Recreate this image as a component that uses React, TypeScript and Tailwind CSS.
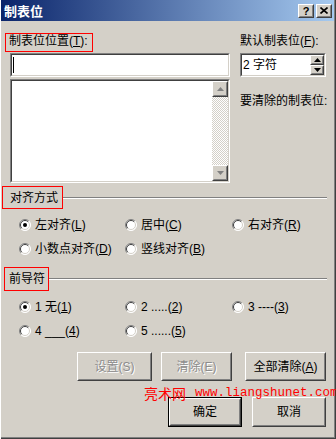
import React from "react";

const FONT = "font-['Liberation_Sans','Noto_Sans_CJK_SC',sans-serif]";

function Sunken({ className, children }: { className: string; children?: React.ReactNode }) {
  return (
    <div className={"border border-t-[#808080] border-l-[#808080] border-b-white border-r-white " + className}>
      <div className="h-full w-full border border-t-[#404040] border-l-[#404040] border-b-[#d4d0c8] border-r-[#d4d0c8] bg-white flex">
        {children}
      </div>
    </div>
  );
}

function Raised({ className, children }: { className: string; children?: React.ReactNode }) {
  return (
    <div className={"border border-t-white border-l-white border-b-[#404040] border-r-[#404040] bg-[#d4d0c8] " + className}>
      <div className="h-full w-full border border-t-[#d4d0c8] border-l-[#d4d0c8] border-b-[#808080] border-r-[#808080] flex items-center justify-center">
        {children}
      </div>
    </div>
  );
}

function Tri({ up, color }: { up: boolean; color: string }) {
  return (
    <svg width="7" height="4" viewBox="0 0 7 4">
      {up ? <polygon points="3.5,0 7,4 0,4" fill={color} /> : <polygon points="0,0 7,0 3.5,4" fill={color} />}
    </svg>
  );
}

function RadioDot({ checked }: { checked?: boolean }) {
  return (
    <svg width="12" height="12" viewBox="0 0 12 12" className="shrink-0">
      <circle cx="6" cy="6" r="5.5" fill="#ffffff" />
      <path d="M2.1 9.9 A5.5 5.5 0 0 1 9.9 2.1" stroke="#808080" fill="none" />
      <path d="M9.9 2.1 A5.5 5.5 0 0 1 2.1 9.9" stroke="#ffffff" fill="none" />
      <path d="M2.8 9.2 A4.5 4.5 0 0 1 9.2 2.8" stroke="#404040" fill="none" />
      <path d="M9.2 2.8 A4.5 4.5 0 0 1 2.8 9.2" stroke="#d4d0c8" fill="none" />
      {checked && <circle cx="6" cy="6" r="2" fill="#000000" />}
    </svg>
  );
}

function Radio({ checked, children, w }: { checked?: boolean; children: React.ReactNode; w: string }) {
  return (
    <div className={"flex items-center gap-[4px] " + w}>
      <RadioDot checked={checked} />
      <span className="text-[12px] leading-[14px] whitespace-nowrap">{children}</span>
    </div>
  );
}

function SectionHead({ label, boxCls, lineCls }: { label: string; boxCls: string; lineCls: string }) {
  return (
    <div className="flex items-center">
      <div className={"border border-[#ff0000] text-[12px] flex items-center " + boxCls}>{label}</div>
      <div className={"h-[2px] border-t border-t-[#808080] border-b border-b-white flex-1 " + lineCls} />
    </div>
  );
}

export default function App() {
  return (
    <div
      className={
        "relative w-[336px] h-[439px] bg-[#d4d0c8] overflow-hidden text-black flex flex-col " +
        FONT +
        " shadow-[inset_1px_0_0_#ffffff,inset_-1px_-1px_0_#404040,inset_-2px_-2px_0_#808080]"
      }
    >
      {/* Title bar */}
      <div className="h-[21px] mx-[1px] mr-[2px] flex items-center bg-[linear-gradient(to_right,#0a246a,#a6caf0)]">
        <span className="ml-[3px] pt-[2px] text-white font-bold text-[13px] leading-[15px]">制表位</span>
        <div className="ml-auto flex gap-[2px] mr-[2px]">
          <Raised className="w-[16px] h-[14px]">
            <span className="text-[11px] font-bold leading-[10px] font-['Liberation_Sans',sans-serif]">?</span>
          </Raised>
          <Raised className="w-[16px] h-[14px]">
            <svg width="8" height="7" viewBox="0 0 8 7">
              <path d="M0.5 0.5 L7.5 6.5 M7.5 0.5 L0.5 6.5" stroke="#000" strokeWidth="1.6" />
            </svg>
          </Raised>
        </div>
      </div>

      {/* Top row */}
      <div className="flex mt-[12px]">
        <div className="ml-[5px] w-[225px] flex flex-col">
          <div className="w-[88px] h-[19px] border border-[#ff0000] pl-[3px] text-[12px] leading-[15px] whitespace-nowrap">
            制表位位置(<u>T</u>):
          </div>
          <Sunken className="ml-[5px] mt-[1px] w-[220px] h-[24px]">
            <div className="ml-[1px] mt-[2px] w-[1px] h-[16px] bg-black" />
          </Sunken>
          <Sunken className="ml-[5px] mt-[2px] w-[220px] h-[104px]">
            <div className="flex-1" />
            <div className="w-[16px] h-full flex flex-col">
              <Raised className="w-[16px] h-[16px]">
                <Tri up color="#808080" />
              </Raised>
              <div className="flex-1 [background-image:repeating-conic-gradient(#d4d0c8_0%_25%,#ffffff_0%_50%)] [background-size:2px_2px]" />
              <Raised className="w-[16px] h-[16px]">
                <Tri up={false} color="#808080" />
              </Raised>
            </div>
          </Sunken>
        </div>
        <div className="ml-[10px] w-[87px] flex flex-col">
          <div className="h-[19px] pt-[1px] text-[12px] leading-[15px] whitespace-nowrap">
            默认制表位(<u>F</u>):
          </div>
          <Sunken className="mt-[1px] w-[86px] h-[24px]">
            <div className="flex-1 pl-[1px] text-[12px] leading-[20px]">2 字符</div>
            <div className="w-[14px] flex flex-col">
              <Raised className="w-[14px] h-[10px]">
                <Tri up color="#000000" />
              </Raised>
              <Raised className="w-[14px] h-[10px]">
                <Tri up={false} color="#000000" />
              </Raised>
            </div>
          </Sunken>
          <div className="mt-[16px] text-[12px] leading-[16px] whitespace-nowrap">要清除的制表位:</div>
        </div>
      </div>

      {/* Alignment */}
      <div className="mt-[3px]">
        <SectionHead label="对齐方式" boxCls="ml-[2px] w-[61px] h-[23px] pl-[7px]" lineCls="mr-[9px]" />
      </div>
      <div className="mt-[6px] h-[20px] flex items-center pl-[19px]">
        <Radio checked w="w-[106px]">
          左对齐(<u>L</u>)
        </Radio>
        <Radio w="w-[107px]">
          居中(<u>C</u>)
        </Radio>
        <Radio w="w-[90px]">
          右对齐(<u>R</u>)
        </Radio>
      </div>
      <div className="mt-[4px] h-[20px] flex items-center pl-[19px]">
        <Radio w="w-[106px]">
          小数点对齐(<u>D</u>)
        </Radio>
        <Radio w="w-[107px]">
          竖线对齐(<u>B</u>)
        </Radio>
      </div>

      {/* Leader */}
      <div className="mt-[8px]">
        <SectionHead label="前导符" boxCls="ml-[4px] w-[45px] h-[24px] pl-[4px]" lineCls="mr-[9px]" />
      </div>
      <div className="mt-[6px] h-[20px] flex items-center pl-[19px]">
        <Radio checked w="w-[106px]">
          1 无(<u>1</u>)
        </Radio>
        <Radio w="w-[107px]">
          2 .....(<u>2</u>)
        </Radio>
        <Radio w="w-[90px]">
          3 ----(<u>3</u>)
        </Radio>
      </div>
      <div className="mt-[4px] h-[20px] flex items-center pl-[19px]">
        <Radio w="w-[106px]">
          4 ___(<u>4</u>)
        </Radio>
        <Radio w="w-[107px]">
          5 ......(<u>5</u>)
        </Radio>
      </div>

      {/* Buttons */}
      <div className="mt-[11px] h-[29px] flex text-[12px]">
        <Raised className="ml-[77px] w-[75px] h-[29px]">
          <span className="text-[#8c8c8c] [text-shadow:1px_1px_0_#ffffff]">设置(S)</span>
        </Raised>
        <Raised className="ml-[9px] w-[71px] h-[29px]">
          <span className="text-[#8c8c8c] [text-shadow:1px_1px_0_#ffffff]">清除(E)</span>
        </Raised>
        <Raised className="ml-[13px] w-[81px] h-[29px]">
          <span>
            全部清除(<u>A</u>)
          </span>
        </Raised>
      </div>
      <div className="mt-[16px] h-[30px] flex text-[12px]">
        <div className="ml-[168px] w-[74px] h-[30px] border border-black">
          <Raised className="w-full h-full">
            <span>确定</span>
          </Raised>
        </div>
        <Raised className="ml-[10px] w-[74px] h-[30px]">
          <span>取消</span>
        </Raised>
      </div>

      {/* Watermark overlay */}
      <div className="absolute left-[144px] top-[385px] flex items-center whitespace-nowrap text-[#ff0000]">
        <span className="text-[14px] leading-[16px] font-['Noto_Sans_CJK_SC',sans-serif]">亮术网</span>
        <span className="ml-[9px] text-[12.5px] leading-[16px] font-['Liberation_Mono',monospace]">www.liangshunet.com</span>
      </div>
    </div>
  );
}
